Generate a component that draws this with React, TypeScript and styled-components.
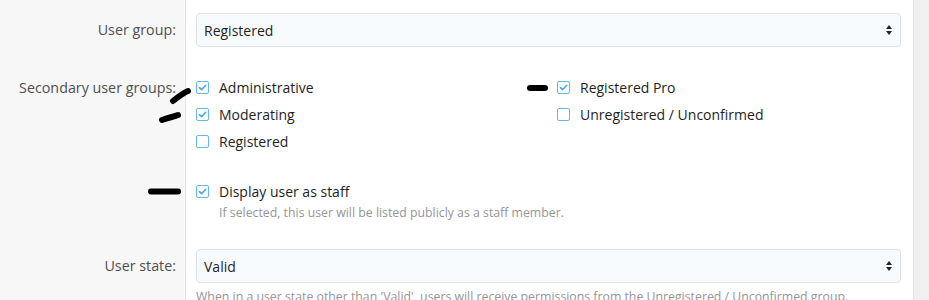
import styled, { createGlobalStyle } from 'styled-components';

const GlobalStyle = createGlobalStyle`
  html, body {
    margin: 0;
    padding: 0;
    background: #ffffff;
  }
  body {
    font-family: 'Open Sans', 'Liberation Sans', sans-serif;
    overflow: hidden;
  }
`;

type Group = { label: string; checked: boolean };

const leftGroups: Group[] = [
  { label: 'Administrative', checked: true },
  { label: 'Moderating', checked: true },
  { label: 'Registered', checked: false },
];

const rightGroups: Group[] = [
  { label: 'Registered Pro', checked: true },
  { label: 'Unregistered / Unconfirmed', checked: false },
];

function CheckBox({ checked }: { checked: boolean }) {
  return (
    <StBox>
      {checked && (
        <svg width="9" height="9" viewBox="0 0 9 9">
          <path d="M1.4 4.6 L3.6 6.7 L7.7 2.3" fill="none" stroke="#4aa8ea" strokeWidth="1.6" strokeLinecap="round" strokeLinejoin="round" />
        </svg>
      )}
    </StBox>
  );
}

function Select({ value }: { value: string }) {
  return (
    <StSelect>
      <span>{value}</span>
      <svg width="8" height="12" viewBox="0 0 8 12">
        <path d="M4 1 L7 5 H1 Z" fill="#222" />
        <path d="M4 11 L7 7 H1 Z" fill="#222" />
      </svg>
    </StSelect>
  );
}

export default function App() {
  return (
    <>
      <GlobalStyle />
      <StPage>
        <StMain>
          <StRow $top={13} $bottom={13}>
            <StLabel $lineHeight={34}>User group:</StLabel>
            <StControl>
              <Select value="Registered" />
            </StControl>
          </StRow>

          <StRow $top={14} $bottom={10}>
            <StLabel $lineHeight={27}>Secondary user groups:</StLabel>
            <StControl>
              <StColumns>
                <StList>
                  {leftGroups.map((g) => (
                    <StCheck key={g.label}>
                      <CheckBox checked={g.checked} />
                      {g.label}
                    </StCheck>
                  ))}
                </StList>
                <StList>
                  {rightGroups.map((g) => (
                    <StCheck key={g.label}>
                      <CheckBox checked={g.checked} />
                      {g.label}
                    </StCheck>
                  ))}
                </StList>
              </StColumns>
            </StControl>
          </StRow>

          <StRow $top={13} $bottom={14}>
            <StLabel $lineHeight={27} />
            <StControl>
              <StCheck>
                <CheckBox checked />
                Display user as staff
              </StCheck>
              <StHint $indent={23}>If selected, this user will be listed publicly as a staff member.</StHint>
            </StControl>
          </StRow>

          <StRow $top={14} $bottom={14}>
            <StLabel $lineHeight={34}>User state:</StLabel>
            <StControl>
              <Select value="Valid" />
              <StHint $indent={0} $gap={6}>
                When in a user state other than 'Valid', users will receive permissions from the Unregistered / Unconfirmed group.
              </StHint>
            </StControl>
          </StRow>
        </StMain>
        <StSide />

        <StMarks width="929" height="300" viewBox="0 0 929 300">
          <path d="M173 101 C178 97 183 93 188 91" />
          <path d="M162 120 C167 118 173 117 178 115" />
          <path d="M530 88 L545 88" strokeWidth="7" />
          <path d="M151 191.5 L178 191.5" strokeWidth="7.5" />
        </StMarks>
      </StPage>
    </>
  );
}

const StPage = styled.div`
  position: relative;
  display: flex;
  width: 929px;
  height: 300px;
  overflow: hidden;
`;

const StMain = styled.div`
  width: 913px;
  display: flex;
  flex-direction: column;
  background: linear-gradient(to right, #f7f7f7 0, #f7f7f7 185px, #e4e4e4 185px, #e4e4e4 186px, #ffffff 186px);
`;

const StSide = styled.div`
  flex: 1;
  background: #f0f0f0;
  border-left: 1px solid #e2e2e2;
`;

const StRow = styled.div<{ $top: number; $bottom: number }>`
  display: grid;
  grid-template-columns: 186px 1fr;
  padding: ${(p) => p.$top}px 0 ${(p) => p.$bottom}px;
`;

const StLabel = styled.div<{ $lineHeight: number }>`
  text-align: right;
  padding-right: 10px;
  font-size: 14.3px;
  line-height: ${(p) => p.$lineHeight}px;
  color: #4f4f4f;
  white-space: nowrap;
`;

const StControl = styled.div`
  padding: 0 12px 0 10px;
  min-width: 0;
`;

const StSelect = styled.div`
  display: flex;
  align-items: center;
  justify-content: space-between;
  height: 34px;
  box-sizing: border-box;
  padding: 0 7px 0 7px;
  background: #f8fbfd;
  border: 1px solid #dde2e8;
  border-radius: 4px;
  font-size: 14px;
  color: #1e1e1e;
`;

const StColumns = styled.div`
  display: grid;
  grid-template-columns: 361px 1fr;
`;

const StList = styled.div`
  display: flex;
  flex-direction: column;
`;

const StCheck = styled.div`
  display: flex;
  align-items: center;
  gap: 10px;
  height: 27px;
  font-size: 14px;
  color: #1e1e1e;
`;

const StBox = styled.span`
  display: inline-flex;
  align-items: center;
  justify-content: center;
  width: 13px;
  height: 13px;
  box-sizing: border-box;
  border: 1.5px solid #6ab5e8;
  border-radius: 2px;
  background: #ffffff;
  flex: none;
`;

const StHint = styled.div<{ $indent: number; $gap?: number }>`
  padding-left: ${(p) => p.$indent}px;
  margin-top: ${(p) => p.$gap ?? 0}px;
  font-size: 12.3px;
  line-height: 16px;
  color: #959595;
  white-space: nowrap;
`;

const StMarks = styled.svg`
  position: absolute;
  left: 0;
  top: 0;
  pointer-events: none;

  path {
    fill: none;
    stroke: #000;
    stroke-width: 6;
    stroke-linecap: round;
  }
`;
